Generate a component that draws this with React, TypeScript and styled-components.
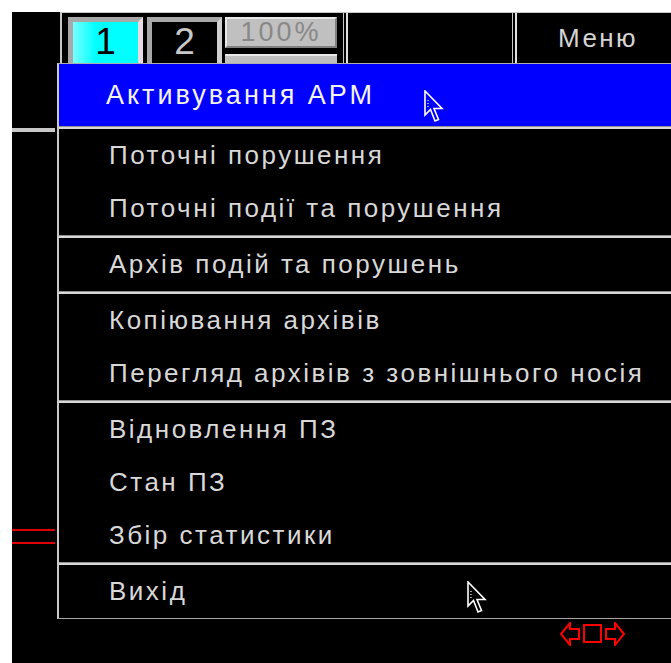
import React from 'react';
import styled, { createGlobalStyle } from 'styled-components';

const GlobalStyle = createGlobalStyle`
  html, body {
    margin: 0;
    padding: 0;
    background: #ffffff;
  }
  body {
    font-family: 'Liberation Sans', Arial, sans-serif;
  }
`;

const Screen = styled.div`
  position: relative;
  margin: 12px 0 0 12px;
  width: 659px;
  height: 651px;
  background: #000;
  overflow: hidden;
  display: flex;
  flex-direction: column;
`;

const TopBar = styled.div`
  height: 51px;
  margin-left: 48px;
  border-top: 1px solid #c8c8c8;
  border-left: 2px solid #c8c8c8;
  display: flex;
  align-items: flex-start;
  padding: 4px 0 0 6px;
  box-sizing: border-box;
  flex-shrink: 0;
`;

const PageTab = styled.div<{ $active?: boolean }>`
  width: 75px;
  height: 52px;
  box-sizing: border-box;
  border: 5px solid #a8a8a8;
  border-right-color: ${p => (p.$active ? '#e8dce0' : '#d0d0d0')};
  background: ${p => (p.$active ? 'linear-gradient(90deg, #7ff 0%, #0ff 35%, #0ff 100%)' : '#000')};
  color: ${p => (p.$active ? '#000' : '#c8c8c8')};
  font-size: 37px;
  line-height: 40px;
  text-align: center;
  margin-right: ${p => (p.$active ? '4px' : '3px')};
`;

const ZoomColumn = styled.div`
  width: 112px;
  display: flex;
  flex-direction: column;
  gap: 6px;
`;

const ZoomButton = styled.div`
  height: 31px;
  box-sizing: border-box;
  background: #c0c0c0;
  border: 2px solid;
  border-color: #e8e8e8 #808080 #808080 #e8e8e8;
  color: #888;
  font-size: 27px;
  letter-spacing: 3px;
  line-height: 26px;
  text-align: center;
`;

const ZoomBar = styled.div`
  height: 12px;
  background: #c0c0c0;
  border-top: 2px solid #e8e8e8;
`;

const Divider = styled.div<{ $gap: number }>`
  align-self: stretch;
  margin: -4px 0 0 ${p => p.$gap}px;
  width: 2px;
  border-left: 1px solid #c8c8c8;
  border-right: 2px solid #e0e0e0;
`;

const Spacer = styled.div`
  flex: 1;
`;

const MenuLabel = styled.div`
  width: 146px;
  color: #d4d4d4;
  font-size: 26px;
  letter-spacing: 2.4px;
  text-align: center;
  line-height: 42px;
  padding-left: 8px;
`;

const Body = styled.div`
  flex: 1;
  display: flex;
`;

const LeftRail = styled.div`
  width: 43px;
  padding-top: 65px;
  display: flex;
  flex-direction: column;
`;

const RailLine = styled.div<{ $color: string; $gap: number; $h: number }>`
  height: ${p => p.$h}px;
  margin-top: ${p => p.$gap}px;
  background: ${p => p.$color};
`;

const Footer = styled.div`
  height: 41px;
  display: flex;
  justify-content: flex-end;
  align-items: flex-start;
  gap: 3px;
  padding-right: 46px;
  flex-shrink: 0;
`;

const DropMenu = styled.div`
  position: absolute;
  left: 45px;
  top: 51px;
  width: 640px;
  border-top: 1px solid #b0b0b0;
  border-left: 2px solid #c8c8c8;
  border-bottom: 1px solid #a8a8a8;
  background: #000;
`;

const Group = styled.div`
  & + & {
    border-top: 1px solid #909090;
    box-shadow: inset 0 2px 0 #d8d8d8;
    padding-top: 2px;
  }
`;

const Item = styled.div<{ $selected?: boolean; $h?: number }>`
  height: ${p => p.$h ?? 53}px;
  display: flex;
  align-items: center;
  padding-left: ${p => (p.$selected ? 47 : 50)}px;
  background: ${p => (p.$selected ? '#0000ff' : 'transparent')};
  color: ${p => (p.$selected ? '#f4f4f4' : '#d8d8d8')};
  font-size: ${p => (p.$selected ? 27 : 26)}px;
  letter-spacing: ${p => (p.$selected ? 3 : 2.5)}px;
  white-space: nowrap;
`;

const Pointer = styled.svg<{ $x: number; $y: number }>`
  position: absolute;
  left: ${p => p.$x}px;
  top: ${p => p.$y}px;
`;

const Cursor = ({ x, y }: { x: number; y: number }) => (
  <Pointer $x={x} $y={y} width="22" height="34" viewBox="0 0 22 34">
    <path
      d="M1 1 L1 25 L6.5 19.5 L11 31 L14.5 29.5 L10 18.5 L18 18.5 Z"
      fill="none"
      stroke="#fff"
      strokeWidth="1.6"
      strokeLinejoin="miter"
    />
    <path d="M4 10 L4 11 M4 13 L4 14 M4 16 L4 17" stroke="#fff" strokeWidth="1.2" />
  </Pointer>
);

const NavArrow = ({ flip }: { flip?: boolean }) => (
  <svg width="20" height="24" viewBox="0 0 20 24" style={flip ? { transform: 'scaleX(-1)' } : undefined}>
    <polygon points="1,12 10,1 10,7 19,7 19,17 10,17 10,23" fill="none" stroke="#f00" strokeWidth="2" />
  </svg>
);

const NavSquare = () => (
  <svg width="19" height="24" viewBox="0 0 19 24">
    <rect x="1" y="3" width="17" height="17" fill="none" stroke="#f00" strokeWidth="2" />
  </svg>
);

const groups: string[][] = [
  ['Поточні порушення', 'Поточні події та порушення'],
  ['Архів подій та порушень'],
  ['Копіювання архівів', 'Перегляд архівів з зовнішнього носія'],
  ['Відновлення ПЗ', 'Стан ПЗ', 'Збір статистики'],
  ['Вихід'],
];

export default function App() {
  return (
    <>
      <GlobalStyle />
      <Screen>
        <TopBar>
          <PageTab $active>1</PageTab>
          <PageTab>2</PageTab>
          <ZoomColumn>
            <ZoomButton>100%</ZoomButton>
            <ZoomBar />
          </ZoomColumn>
          <Divider $gap={6} />
          <Spacer />
          <Divider $gap={0} />
          <MenuLabel>Меню</MenuLabel>
        </TopBar>
        <Body>
          <LeftRail>
            <RailLine $color="#c8c8c8" $gap={0} $h={4} />
            <RailLine $color="#e00000" $gap={397} $h={2} />
            <RailLine $color="#e00000" $gap={11} $h={2} />
          </LeftRail>
        </Body>
        <Footer>
          <NavArrow />
          <NavSquare />
          <NavArrow flip />
        </Footer>

        <DropMenu>
          <Group>
            <Item $selected $h={62}>Активування АРМ</Item>
          </Group>
          {groups.map((items, gi) => (
            <Group key={gi}>
              {items.map(label => (
                <Item key={label}>{label}</Item>
              ))}
            </Group>
          ))}
        </DropMenu>

        <Cursor x={412} y={78} />
        <Cursor x={455} y={569} />
      </Screen>
    </>
  );
}
